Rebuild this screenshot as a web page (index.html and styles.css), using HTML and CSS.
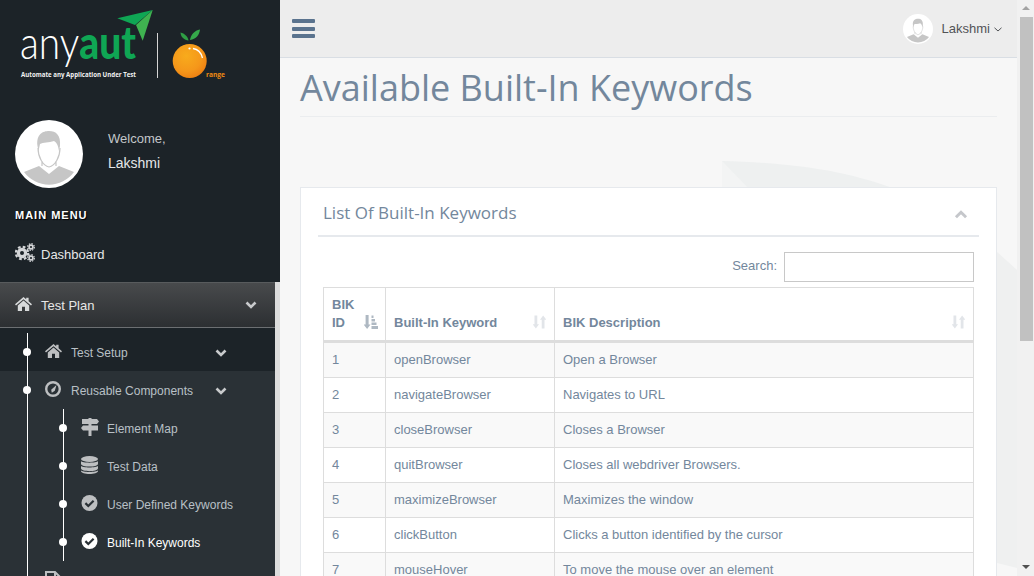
FILE: index.html
```html
<!DOCTYPE html>
<html lang="en">
<head>
<meta charset="utf-8">
<title>Available Built-In Keywords</title>
<link rel="stylesheet" href="styles.css">
</head>
<body>
<svg class="sprite" aria-hidden="true">
  <symbol id="i-home" viewBox="0 0 17 14">
    <path d="M8.5 0 0 7.2l1 1.2 7.5-6.2L16 8.4l1-1.2-3.4-3V.8h-2.4v1.400z"/>
    <path d="M2.800 8.400 8.500 3.600l5.700 4.800V14H10V9.800H7V14H2.800z"/>
  </symbol>
  <symbol id="i-cogs" viewBox="0 0 20 19">
    <g fill="none" stroke="currentColor">
      <circle cx="7" cy="10" r="3.600" stroke-width="3.200"/>
      <circle cx="7" cy="10" r="6.200" stroke-width="2.200" stroke-dasharray="2.700 2.170"/>
      <circle cx="16" cy="4" r="1.900" stroke-width="1.600"/>
      <circle cx="16" cy="4" r="3.300" stroke-width="1.300" stroke-dasharray="1.500 1.090"/>
      <circle cx="16" cy="15" r="1.900" stroke-width="1.600"/>
      <circle cx="16" cy="15" r="3.300" stroke-width="1.300" stroke-dasharray="1.500 1.090"/>
    </g>
  </symbol>
  <symbol id="i-compass" viewBox="0 0 16 16">
    <circle cx="8" cy="8" r="6.800" fill="none" stroke="currentColor" stroke-width="2.400"/>
    <path d="M11.500 4 9.800 9.700 6.800 11.800 6.200 8.800z"/>
  </symbol>
  <symbol id="i-signs" viewBox="0 0 18 18">
    <path d="M7.500 0h3v1H16l2 2.500L16 6h-5.500v1.500H17V12.500h-6.500V18h-3V12.500H2L0 10l2-2.500H7.500V6H1V1H7.500z"/>
  </symbol>
  <symbol id="i-db" viewBox="0 0 17 18">
    <ellipse cx="8.500" cy="3" rx="8.500" ry="3"/>
    <path d="M0 5c1 2.200 15.800 2.200 17 0v2.700c0 3.800-17 3.800-17 0zM0 9.800c1 2.200 15.800 2.200 17 0v2.500c0 3.800-17 3.800-17 0zM0 14.300c1 2.200 15.800 2.200 17 0V15c0 4-17 4-17 0z"/>
  </symbol>
  <symbol id="i-check" viewBox="0 0 16 16">
    <circle cx="8" cy="8" r="8"/>
    <path d="M3.900 8.100 6.800 11l5.300-5.300" fill="none" stroke="#2a3136" stroke-width="2.200"/>
  </symbol>
  <symbol id="i-file" viewBox="0 0 16 19">
    <path d="M1 1h9l5 5v12H1z" fill="none" stroke="currentColor" stroke-width="2"/>
    <path d="M10 1v5h5" fill="none" stroke="currentColor" stroke-width="2"/>
  </symbol>
  <symbol id="i-chev" viewBox="0 0 12 8">
    <path d="M1.500 1.500 6 6l4.500-4.500" fill="none" stroke="currentColor" stroke-width="2.600"/>
  </symbol>
  <symbol id="i-sort" viewBox="0 0 14 14">
    <path d="M1.600 0h3v9.500h1.900L3.100 14 -.3 9.500h1.900zM9.400 14h3V4.500h1.900L10.900 0 7.500 4.500h1.900z"/>
  </symbol>
  <symbol id="i-sort-asc" viewBox="0 0 14 14">
    <path d="M1.600 0h3v9.500h1.900L3.100 14 -.3 9.500h1.900zM7.500 11h6.500v3H7.500zM7.500 7.500h5v2.500h-5zM7.500 4h3.500v2.500H7.500zM7.500 .500h2V3h-2z"/>
  </symbol>
  <symbol id="i-avatar" viewBox="0 0 68 68">
    <circle cx="34" cy="34" r="34" fill="#fff"/>
    <path d="M9 52 24 46l10 8 10-8 15 6A31 31 0 0 1 9 52z" fill="#c6c6c6"/>
    <path d="M22.500 26C21 14 28 11 34 11c7 0 12 4 11 15l-1 5c-1-6-2-8-5-10-5 2-11 1-14 3l-1.500 7z" fill="#c6c6c6"/>
    <path d="M23 28c0 9 5 18 11 19 6-1 11-10 11-19M27 41v5M41 41v5" fill="none" stroke="#c6c6c6" stroke-width="1.200"/>
  </symbol>
</svg>

<div class="app">
  <aside class="sidebar">
    <div class="sidebar-top">
      <div class="brand">
        <svg class="logo" viewBox="0 0 240 90" width="240" height="90" role="img" aria-label="anyaut logo">
          <text class="logo-word" x="20" y="59" textLength="116" lengthAdjust="spacingAndGlyphs"><tspan class="logo-any">any</tspan><tspan class="logo-aut">aut</tspan></text>
          <polygon points="117.300,18.300 152.700,10 135,25" fill="#0fa654"/>
          <polygon points="152.700,10 142.700,40.700 136,25" fill="#3fb350"/>
          <text class="logo-tag" x="21" y="77" textLength="115" lengthAdjust="spacingAndGlyphs">Automate any Application Under Test</text>
          <rect x="157" y="33" width="1" height="45" fill="#d5d5d5"/>
          <defs>
            <radialGradient id="orange" cx="0.400" cy="0.350" r="0.750">
              <stop offset="0" stop-color="#f8ab1c"/>
              <stop offset="0.600" stop-color="#f5971a"/>
              <stop offset="1" stop-color="#ec7a10"/>
            </radialGradient>
          </defs>
          <circle cx="189.700" cy="61" r="17" fill="url(#orange)"/>
          <path d="M180.500 32.500c4 1 7.500 4 8 8-4-.5-8-3.500-8-8z" fill="#2f9e44"/>
          <path d="M200 29.500c-.5 5-4 10-10 10.500.5-5 4.500-9.500 10-10.500z" fill="#35a84a"/>
          <path d="M193 48.500c4 .5 8 3.500 9.500 9.500" fill="none" stroke="#fff" stroke-width="1.300"/>
          <circle cx="189.500" cy="48.500" r="1.100" fill="#fff"/>
          <text class="logo-range" x="206" y="77" textLength="19" lengthAdjust="spacingAndGlyphs">range</text>
        </svg>
      </div>
      <div class="profile">
        <svg class="profile-avatar"><use href="#i-avatar"/></svg>
        <div class="profile-info">
          <span class="welcome">Welcome,</span>
          <span class="profile-name">Lakshmi</span>
        </div>
      </div>
      <h3 class="menu-heading">Main Menu</h3>
      <a class="dash-link"><svg class="ico ico-cogs"><use href="#i-cogs"/></svg>Dashboard</a>
    </div>

    <nav class="tree">
      <a class="tree-head">
        <svg class="ico ico-home"><use href="#i-home"/></svg>
        <span class="grow">Test Plan</span>
        <svg class="chev"><use href="#i-chev"/></svg>
      </a>
      <ul class="level1">
        <li class="l1-item dark">
          <a class="l1-link">
            <svg class="ico ico-home"><use href="#i-home"/></svg>
            <span class="grow">Test Setup</span>
            <svg class="chev"><use href="#i-chev"/></svg>
          </a>
        </li>
        <li class="l1-item">
          <a class="l1-link">
            <svg class="ico ico-compass"><use href="#i-compass"/></svg>
            <span class="grow">Reusable Components</span>
            <svg class="chev"><use href="#i-chev"/></svg>
          </a>
          <ul class="level2">
            <li class="l2-item"><svg class="ico ico-signs"><use href="#i-signs"/></svg>Element Map</li>
            <li class="l2-item"><svg class="ico ico-db"><use href="#i-db"/></svg>Test Data</li>
            <li class="l2-item"><svg class="ico ico-check"><use href="#i-check"/></svg>User Defined Keywords</li>
            <li class="l2-item active"><svg class="ico ico-check"><use href="#i-check"/></svg>Built-In Keywords</li>
          </ul>
        </li>
        <li class="l1-item plain">
          <a class="l1-link">
            <svg class="ico ico-file"><use href="#i-file"/></svg>
          </a>
        </li>
      </ul>
    </nav>
  </aside>

  <main class="main">
    <svg class="decor" viewBox="0 0 737 576" width="737" height="576" aria-hidden="true">
      <path d="M442 161C520 163 570 172 618 190H442z" fill="#eef0f0"/>
      <path d="M442 161 470 190H442z" fill="#f3f4f4"/>
      <path d="M717 252 737 270V568L717 563z" fill="#eff0f0"/>
    </svg>
    <header class="topbar">
      <button class="burger" type="button" aria-label="Toggle menu"><i></i><i></i><i></i></button>
      <div class="user">
        <svg class="user-avatar"><use href="#i-avatar"/></svg>
        <span>Lakshmi</span>
        <svg class="user-chev" viewBox="0 0 8 5"><path d="M.5.800 4 4 7.500.800" fill="none" stroke="currentColor" stroke-width="1"/></svg>
      </div>
    </header>
    <div class="content">
      <h1 class="page-title">Available Built-In Keywords</h1>
      <section class="panel">
        <div class="panel-head">
          <h2>List Of Built-In Keywords</h2>
          <svg class="panel-toggle"><use href="#i-chev"/></svg>
        </div>
        <div class="panel-body">
          <label class="search">Search:<input type="text"></label>
          <table class="grid">
            <thead>
              <tr>
                <th class="c-id"><div class="th-in">BIK ID<svg class="sort sort-on"><use href="#i-sort-asc"/></svg></div></th>
                <th class="c-kw"><div class="th-in">Built-In Keyword<svg class="sort"><use href="#i-sort"/></svg></div></th>
                <th class="c-desc"><div class="th-in">BIK Description<svg class="sort"><use href="#i-sort"/></svg></div></th>
              </tr>
            </thead>
            <tbody>
              <tr><td>1</td><td>openBrowser</td><td>Open a Browser</td></tr>
              <tr><td>2</td><td>navigateBrowser</td><td>Navigates to URL</td></tr>
              <tr><td>3</td><td>closeBrowser</td><td>Closes a Browser</td></tr>
              <tr><td>4</td><td>quitBrowser</td><td>Closes all webdriver Browsers.</td></tr>
              <tr><td>5</td><td>maximizeBrowser</td><td>Maximizes the window</td></tr>
              <tr><td>6</td><td>clickButton</td><td>Clicks a button identified by the cursor</td></tr>
              <tr><td>7</td><td>mouseHover</td><td>To move the mouse over an element</td></tr>
            </tbody>
          </table>
        </div>
      </section>
    </div>
  </main>

  <div class="scrollbar" aria-hidden="true">
    <span class="sb-up"></span>
    <span class="sb-thumb"></span>
    <span class="sb-down"></span>
  </div>
</div>
</body>
</html>
```
FILE: styles.css
```css
* { box-sizing: border-box; }
html, body { margin: 0; padding: 0; height: 100%; overflow: hidden; }
body { font-family: "Liberation Sans", Arial, sans-serif; font-size: 13px; color: #73879c; background: #f7f7f7; }
ul { list-style: none; margin: 0; padding: 0; }
.sprite { display: none; }
.app { display: flex; width: 1034px; height: 576px; overflow: hidden; }

/* sidebar */
.sidebar { width: 280px; flex: none; display: flex; flex-direction: column; background: #f7f7f7; }
.sidebar-top { height: 282px; background: #1c2328; display: flex; flex-direction: column; }
.brand { height: 120px; flex: none; }
.logo { display: block; }
.logo-word { font-family: Lato, sans-serif; font-size: 46px; }
.logo-any { font-weight: 300; fill: #fff; }
.logo-aut { font-weight: 900; fill: #0fa654; }
.logo-tag { font-family: "Open Sans", sans-serif; font-weight: 700; font-size: 7px; fill: #f2f2f2; }
.logo-range { font-family: "Open Sans", sans-serif; font-weight: 700; font-size: 7px; fill: #ef8a12; }
.profile { display: flex; padding-left: 15px; height: 68px; flex: none; }
.profile-avatar { width: 68px; height: 68px; flex: none; }
.profile-info { margin-left: 25px; display: flex; flex-direction: column; padding-top: 11px; gap: 8px; }
.welcome { font-size: 13px; line-height: 16px; color: #c3c7ca; }
.profile-name { font-size: 14px; line-height: 16px; color: #e4e7e9; }
.menu-heading { margin: 20px 0 0 15px; font-size: 11px; line-height: 14px; font-weight: 700; letter-spacing: 1px; text-transform: uppercase; color: #fff; text-shadow: 1px 1px 1px #000; }
.dash-link { display: flex; align-items: center; margin: 24px 0 0 15px; color: #e7e7e7; font-size: 13px; line-height: 18px; }
.ico { flex: none; fill: currentColor; color: #bdbfc1; display: block; }
.ico-cogs { width: 20px; height: 19px; margin-right: 6px; margin-top: -5px; color: #d4d6d8; }

.tree { flex: 1; width: 280px; border-right: 5px solid #dddddd; background: #2a3136; min-height: 0; }
.tree-head { display: flex; align-items: center; height: 46px; padding: 0 18px 0 15px; border-top: 1px solid #585b5d; border-bottom: 1px solid #6c6f72; background: linear-gradient(#484a4c, #2c2f32); color: #e7e7e7; }
.tree-head .ico-home { width: 17px; height: 14px; margin-right: 9px; margin-top: -3px; color: #d8dadb; }
.grow { flex: 1; }
.chev { width: 12px; height: 8px; flex: none; color: #c8cacc; }
.level1 { position: relative; }
.level1::before { content: ""; position: absolute; z-index: 1; left: 27px; top: 5px; bottom: 0; width: 1px; background: #fff; }
.l1-item { position: relative; }
.l1-item.dark { background: #1c2328; padding-top: 5px; }
.l1-link { position: relative; display: flex; align-items: center; height: 38px; padding: 2px 48px 0 45px; color: #b9c0c6; font-size: 12px; }
.l1-link::before { content: ""; position: absolute; z-index: 2; left: 23px; top: 15px; width: 8px; height: 8px; border-radius: 50%; background: #fff; }
.plain .l1-link::before { display: none; }
.l1-link .ico { width: 17px; height: 14px; margin-right: 9px; margin-top: -5px; }
.l1-link .ico-compass { width: 16px; height: 16px; margin-right: 10px; }
.l1-link .ico-file { width: 16px; height: 19px; margin-top: -2px; margin-right: 10px; }
.level2 { position: relative; }
.level2::before { content: ""; position: absolute; left: 63px; top: 0; height: 152px; width: 1px; background: #fff; }
.l2-item { position: relative; display: flex; align-items: center; height: 38px; padding: 2px 0 0 81px; color: #b9c0c6; font-size: 12px; }
.l2-item::before { content: ""; position: absolute; left: 59px; top: 15px; width: 8px; height: 8px; border-radius: 50%; background: #fff; }
.l2-item .ico { margin-right: 9px; margin-top: -5px; }
.l2-item .ico-signs { width: 18px; height: 18px; margin-right: 8px; }
.ico-db { width: 17px; height: 18px; }
.ico-check { width: 17px; height: 16px; }
.l2-item.active { color: #fff; }
.l2-item.active .ico { color: #fff; }

/* main */
.main { position: relative; width: 737px; flex: none; display: flex; flex-direction: column; min-height: 0; }
.decor { position: absolute; left: 0; top: 0; }
.topbar { position: relative; flex: none; height: 58px; display: flex; align-items: center; justify-content: space-between; padding: 0 15px 0 12px; background: #ededed; border-bottom: 1px solid #d9dee4; }
.burger { width: 23px; height: 19px; padding: 0; border: 0; background: none; display: flex; flex-direction: column; justify-content: space-between; }
.burger i { display: block; height: 4px; border-radius: 1px; background: #5a738e; }
.user { display: flex; align-items: center; color: #515356; font-size: 13px; }
.user-avatar { width: 30px; height: 30px; margin-right: 9px; }
.user-chev { width: 8px; height: 5px; margin-left: 4px; margin-top: 1px; }
.content { position: relative; padding: 0 20px; flex: 1; min-height: 0; }
.page-title { margin: 0; height: 59px; padding-top: 7px; font-family: "Open Sans", sans-serif; font-size: 36px; line-height: 46px; font-weight: 400; color: #73879c; border-bottom: 1px solid #ebedef; }
.panel { margin-top: 70px; height: 600px; background: #fff; border: 1px solid #e6e9ed; padding: 0 17px; }
.panel-head { display: flex; align-items: center; justify-content: space-between; height: 49px; padding: 2px 11px 0 5px; border-bottom: 2px solid #e6e9ed; }
.panel-head h2 { margin: 0; font-family: "Open Sans", sans-serif; font-size: 17px; font-weight: 400; color: #73879c; }
.panel-toggle { width: 14px; height: 9px; margin-top: 4px; color: #c5c7cb; transform: rotate(180deg); }
.panel-body { padding: 15px 5px 0; }
.search { display: flex; justify-content: flex-end; align-items: flex-start; height: 30px; gap: 7px; line-height: 27px; }
.search input { width: 190px; height: 30px; border: 1px solid #c8c8c8; background: #fff; padding: 0; margin: 0; }
.grid { width: 651px; margin-top: 5px; border-collapse: collapse; table-layout: fixed; color: #73879c; font-size: 13px; line-height: 18px; }
.grid th, .grid td { border: 1px solid #dddddd; padding: 8px; text-align: left; vertical-align: top; }
.grid th { border-bottom-width: 3px; vertical-align: bottom; }
.c-id { width: 62px; }
.c-kw { width: 169px; }
.th-in { display: flex; justify-content: space-between; align-items: flex-end; }
.sort { width: 13px; height: 14px; fill: #e2e5e9; flex: none; margin-bottom: 3px; }
.sort-on { width: 14px; fill: #aeb8c2; margin-right: -1px; }
.grid tbody tr:nth-child(odd) { background: #f9f9f9; }

/* scrollbar */
.scrollbar { width: 17px; flex: none; background: #f1f1f1; display: flex; flex-direction: column; align-items: center; position: relative; }
.sb-up { height: 17px; flex: none; }
.sb-up::before { content: ""; display: block; margin-top: 6px; border: 4px solid transparent; border-top: 0; border-bottom: 4px solid #a3a3a3; }
.sb-thumb { width: 13px; height: 324px; flex: none; background: #c1c1c1; margin-left: 2px; }
.sb-down { margin-top: auto; height: 17px; flex: none; }
.sb-down::before { content: ""; display: block; margin-top: 6px; border: 4px solid transparent; border-bottom: 0; border-top: 4px solid #505050; }
```
